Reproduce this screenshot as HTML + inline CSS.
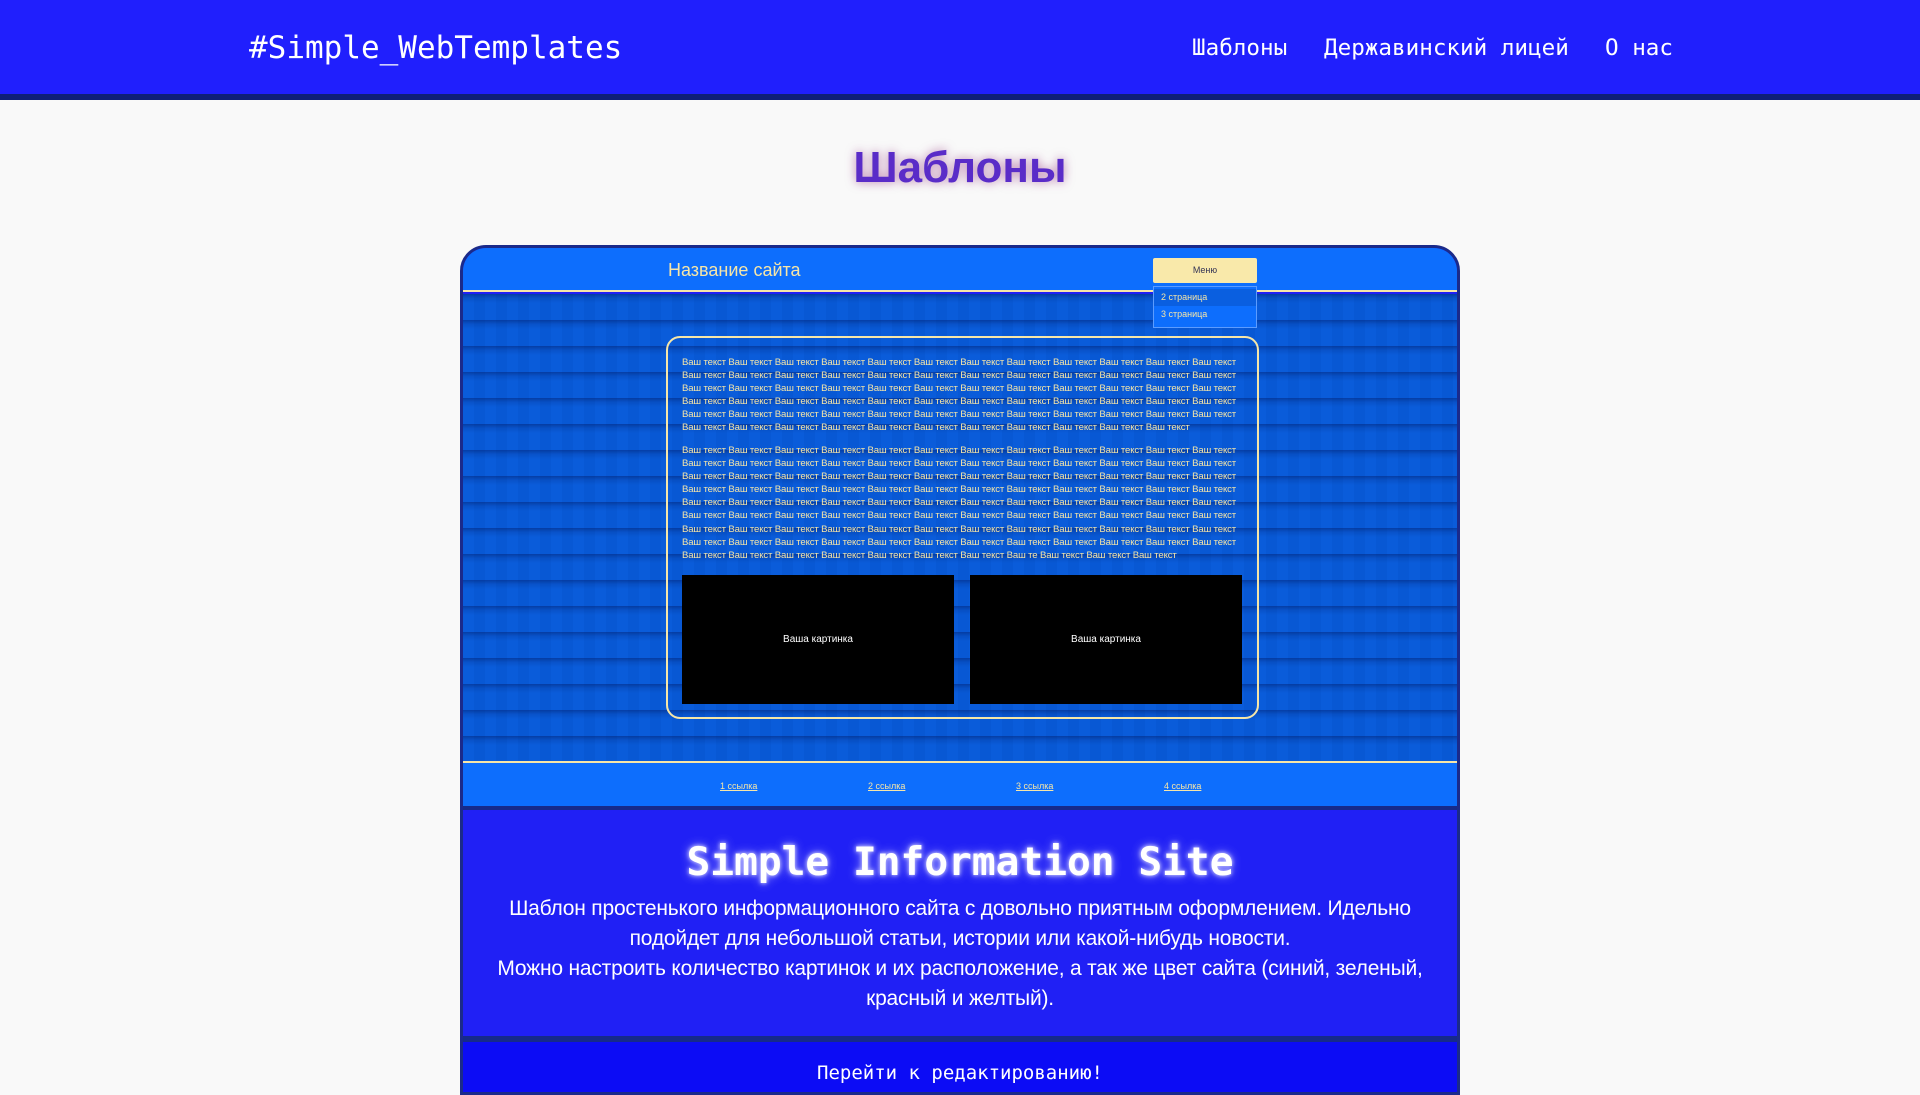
<!DOCTYPE html>
<html><head><meta charset="utf-8">
<style>
*{margin:0;padding:0;box-sizing:border-box}
body{width:1920px;height:1080px;overflow:hidden;background:#f9f9f9;font-family:"Liberation Sans","DejaVu Sans",sans-serif;position:relative}
.hdr{position:absolute;left:0;top:0;width:1920px;height:100px;background:#201ffd;border-bottom:6px solid #0f1f78}
.logo{position:absolute;left:249px;top:30px;font-family:"DejaVu Sans Mono","Liberation Mono",monospace;font-size:31px;color:#fff}
.nav{position:absolute;top:35px;font-family:"DejaVu Sans Mono","Liberation Mono",monospace;font-size:22.6px;color:#fff}
h1{position:absolute;left:0;width:1920px;top:143px;text-align:center;font-size:44px;font-weight:bold;color:#5a2cc8;text-shadow:0 0 10px rgba(140,40,120,.6)}
.card{position:absolute;left:460px;top:245px;width:1000px;height:850px;border:3px solid #1b2a8a;border-radius:26px 26px 0 0;overflow:hidden;background:#2020f5}
.ih{position:absolute;left:0;top:0;width:994px;height:44px;background:#0d6efd;border-bottom:2px solid #f6e6a8}
.ih .t{position:absolute;left:205px;top:12px;font-size:18px;color:#f6e6a8}
.menu{position:absolute;left:690px;top:10px;width:104px;height:25px;background:#f9e9aa;font-size:9px;color:#335;text-align:center;line-height:25px;border-radius:2px}
.dd{position:absolute;left:690px;top:38px;width:104px;height:42px;border:1px solid #5c9cff;background:#0d6efd;z-index:3;font-size:9px;color:#f6e6a8}
.dd div{height:17px;line-height:17px;padding-left:7px}
.dd div:first-child{background:#0a5fe0;margin-top:2px}
.pat{position:absolute;left:0;top:46px;width:994px;height:469px;
background:
linear-gradient(180deg,rgba(0,25,100,.45) 0,rgba(0,25,100,.15) 4px,rgba(0,0,0,0) 9px,rgba(0,0,0,0) 100%),
linear-gradient(90deg,#0a5cda 0 50%,#0858d4 50% 100%);
background-size:22px 26px,22px 26px;border-bottom:2px solid #f6e6a8}
.box{position:absolute;left:203px;top:42px;width:593px;height:383px;border:2px solid #f6e6a8;border-radius:14px}
.txt{position:absolute;left:14px;font-size:9.6px;line-height:13.1px;color:#f6e6a8;white-space:nowrap;letter-spacing:-.15px}
.img{position:absolute;top:237px;width:272px;height:129px;background:#000;color:#fff;font-size:10px;text-align:center;line-height:129px}
.ft{position:absolute;left:0;top:515px;width:994px;height:47px;background:#0d6efd;border-bottom:4px solid #162a8a}
.ft a{position:absolute;top:18px;font-size:9px;color:#f6e6a8;text-decoration:underline}
.desc{position:absolute;left:0;top:562px;width:994px;height:226px;background:#2020f5;text-align:center;color:#fff}
.desc h2{font-family:"DejaVu Sans Mono","Liberation Mono",monospace;font-size:39.5px;font-weight:bold;margin-top:29px;text-shadow:0 0 10px #a0a0ff,0 0 4px #fff}
.desc p{font-size:21px;line-height:30px;width:930px;margin:9px auto 0;letter-spacing:-.2px}
.btn{position:absolute;left:0;top:788px;width:994px;height:66px;background:#0c0cf5;border-top:6px solid #162a8a;text-align:center;color:#fff;font-family:"DejaVu Sans Mono","Liberation Mono",monospace;font-size:19px;padding-top:20px}
</style></head><body>
<div class="hdr"><div class="logo">#Simple_WebTemplates</div>
<div class="nav" style="left:1192px">Шаблоны</div>
<div class="nav" style="left:1324px">Державинский лицей</div>
<div class="nav" style="left:1605px">О нас</div></div>
<h1>Шаблоны</h1>
<div class="card">
<div class="ih"><div class="t">Название сайта</div><div class="menu">Меню</div></div>
<div class="dd"><div>2 страница</div><div>3 страница</div></div>
<div class="pat">
<div class="box">
<div class="txt" style="top:18px">Ваш текст Ваш текст Ваш текст Ваш текст Ваш текст Ваш текст Ваш текст Ваш текст Ваш текст Ваш текст Ваш текст Ваш текст<br>Ваш текст Ваш текст Ваш текст Ваш текст Ваш текст Ваш текст Ваш текст Ваш текст Ваш текст Ваш текст Ваш текст Ваш текст<br>Ваш текст Ваш текст Ваш текст Ваш текст Ваш текст Ваш текст Ваш текст Ваш текст Ваш текст Ваш текст Ваш текст Ваш текст<br>Ваш текст Ваш текст Ваш текст Ваш текст Ваш текст Ваш текст Ваш текст Ваш текст Ваш текст Ваш текст Ваш текст Ваш текст<br>Ваш текст Ваш текст Ваш текст Ваш текст Ваш текст Ваш текст Ваш текст Ваш текст Ваш текст Ваш текст Ваш текст Ваш текст<br>Ваш текст Ваш текст Ваш текст Ваш текст Ваш текст Ваш текст Ваш текст Ваш текст Ваш текст Ваш текст Ваш текст</div>
<div class="txt" style="top:106px">Ваш текст Ваш текст Ваш текст Ваш текст Ваш текст Ваш текст Ваш текст Ваш текст Ваш текст Ваш текст Ваш текст Ваш текст<br>Ваш текст Ваш текст Ваш текст Ваш текст Ваш текст Ваш текст Ваш текст Ваш текст Ваш текст Ваш текст Ваш текст Ваш текст<br>Ваш текст Ваш текст Ваш текст Ваш текст Ваш текст Ваш текст Ваш текст Ваш текст Ваш текст Ваш текст Ваш текст Ваш текст<br>Ваш текст Ваш текст Ваш текст Ваш текст Ваш текст Ваш текст Ваш текст Ваш текст Ваш текст Ваш текст Ваш текст Ваш текст<br>Ваш текст Ваш текст Ваш текст Ваш текст Ваш текст Ваш текст Ваш текст Ваш текст Ваш текст Ваш текст Ваш текст Ваш текст<br>Ваш текст Ваш текст Ваш текст Ваш текст Ваш текст Ваш текст Ваш текст Ваш текст Ваш текст Ваш текст Ваш текст Ваш текст<br>Ваш текст Ваш текст Ваш текст Ваш текст Ваш текст Ваш текст Ваш текст Ваш текст Ваш текст Ваш текст Ваш текст Ваш текст<br>Ваш текст Ваш текст Ваш текст Ваш текст Ваш текст Ваш текст Ваш текст Ваш текст Ваш текст Ваш текст Ваш текст Ваш текст<br>Ваш текст Ваш текст Ваш текст Ваш текст Ваш текст Ваш текст Ваш текст Ваш те Ваш текст Ваш текст Ваш текст</div>
<div class="img" style="left:14px">Ваша картинка</div>
<div class="img" style="left:302px">Ваша картинка</div>
</div></div>
<div class="ft"><a style="left:257px">1 ссылка</a><a style="left:405px">2 ссылка</a><a style="left:553px">3 ссылка</a><a style="left:701px">4 ссылка</a></div>
<div class="desc"><h2>Simple Information Site</h2>
<p>Шаблон простенького информационного сайта с довольно приятным оформлением. Идельно подойдет для небольшой статьи, истории или какой-нибудь новости.<br>Можно настроить количество картинок и их расположение, а так же цвет сайта (синий, зеленый, красный и желтый).</p></div>
<div class="btn">Перейти к редактированию!</div>
</div>
</body></html>
